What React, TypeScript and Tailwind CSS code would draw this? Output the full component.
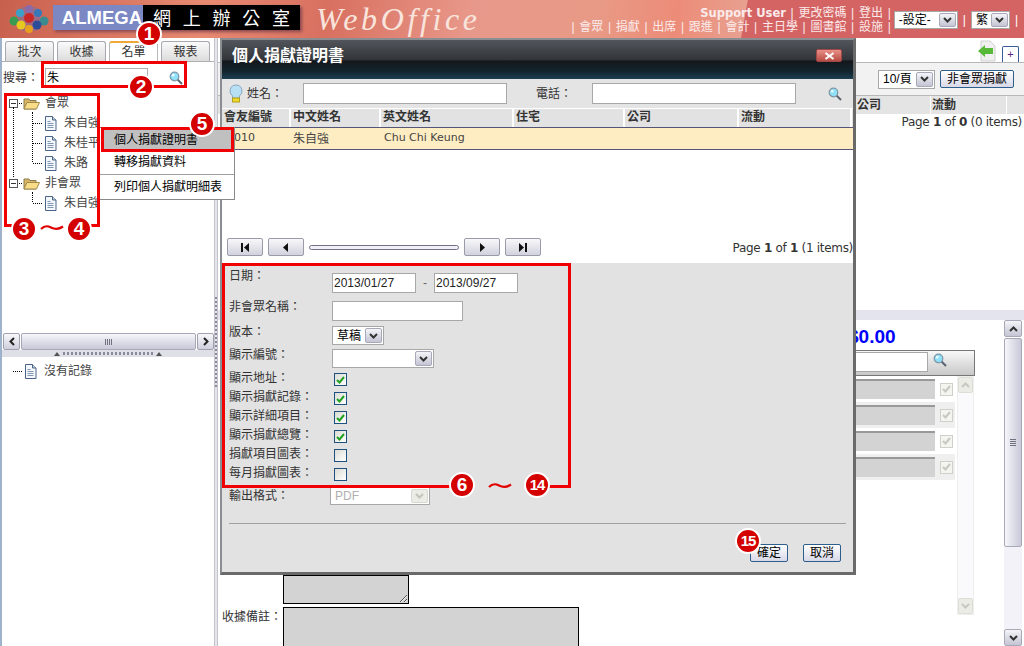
import React from "react";

const cjk = '"Liberation Sans","Noto Sans CJK TC",sans-serif';

function Mag({ className = "" }: { className?: string }) {
  return (
    <svg width="14" height="14" viewBox="0 0 14 14" className={className}>
      <line x1="8.5" y1="8.5" x2="13" y2="13" stroke="#5a6470" strokeWidth="2" />
      <circle cx="5.5" cy="5.5" r="4.3" fill="#8fe0f8" stroke="#7d95a5" strokeWidth="1.2" />
      <circle cx="4.2" cy="4.2" r="1.4" fill="#e6fbff" />
    </svg>
  );
}

function Doc() {
  return (
    <svg width="13" height="15" viewBox="0 0 13 15" className="shrink-0">
      <path d="M1.500.5h7l3.500 3.500v10.500h-10.500z" fill="#f4f7fb" stroke="#4a6488" />
      <path d="M8.500.5v3.500h3.500" fill="#c8d4e4" stroke="#4a6488" />
      <path d="M3.500 5.500h3M3.500 7.500h6M3.500 9.500h6M3.500 11.500h6" stroke="#8095b0" />
    </svg>
  );
}

function Folder() {
  return (
    <svg width="17" height="13" viewBox="0 0 17 13" className="shrink-0">
      <path d="M1 12V2h5l1 1.500h6V12z" fill="#d8b460" stroke="#8a7a50" />
      <path d="M1 12l3-6.500h12.500L13.500 12z" fill="#f8dc88" stroke="#a08a50" />
    </svg>
  );
}

function Chevron({ up = false, color = "#333" }: { up?: boolean; color?: string }) {
  return (
    <svg width="9" height="6" viewBox="0 0 9 6">
      <path d={up ? "M1 5l3.500-3.500L8 5" : "M1 1l3.500 3.500L8 1"} fill="none" stroke={color} strokeWidth="2" />
    </svg>
  );
}

function ArrowBtn({ className = "", faded = false }: { className?: string; faded?: boolean }) {
  return (
    <span
      className={`flex items-center justify-center rounded-[2px] border ${
        faded ? "border-[#d8d8d0] bg-[#ecece6]" : "border-[#a8a8b8] bg-gradient-to-b from-[#f4f4f8] to-[#c4c4d4]"
      } ${className}`}
    >
      <Chevron color={faded ? "#c4c4bc" : "#333"} />
    </span>
  );
}

function Select({ w, h = 19, text, disabled = false, cls = "" }: { w: number; h?: number; text?: string; disabled?: boolean; cls?: string }) {
  return (
    <div
      style={{ width: w, height: h }}
      className={`flex items-center justify-between border border-[#a8a8a8] bg-white p-px text-[12px] ${cls}`}
    >
      <span className={`pl-[3px] leading-none ${disabled ? "text-[#b0b0b0]" : "text-black"}`}>{text}</span>
      <ArrowBtn faded={disabled} className="h-full w-[17px] shrink-0" />
    </div>
  );
}

function Badge({ n, x, y, small = false }: { n: string; x: number; y: number; small?: boolean }) {
  return (
    <span
      style={{ left: x - 13, top: y - 13 }}
      className={`absolute z-30 flex h-[26px] w-[26px] items-center justify-center rounded-full border-2 border-white bg-[#d40000] font-bold text-white ${
        small ? "text-[15px] tracking-[-1px]" : "text-[19px]"
      } font-['Liberation_Sans',sans-serif]`}
    >
      {n}
    </span>
  );
}

function Tilde({ x, y, w, maskCls }: { x: number; y: number; w: number; maskCls: string }) {
  return (
    <div style={{ left: x, top: y, width: w }} className={`absolute z-[25] flex h-[8px] items-center justify-center ${maskCls}`}>
      <svg width="24" height="8" viewBox="0 0 24 8">
        <path d="M1 5c4-4 7-3 10-1.500s7 2.500 12-1" fill="none" stroke="#e00000" strokeWidth="2.200" />
      </svg>
    </div>
  );
}

function RedBox({ x, y, w, h }: { x: number; y: number; w: number; h: number }) {
  return <div style={{ left: x, top: y, width: w, height: h }} className="pointer-events-none absolute z-20 border-[3px] border-[#f00000]" />;
}

function Tab({ label, active = false, w }: { label: string; active?: boolean; w: number }) {
  return (
    <div
      style={{ width: w }}
      className={`flex h-[20px] items-center justify-center rounded-t-[3px] border border-b-0 text-[12px] text-[#333] ${
        active ? "border-[#b8b8b8] border-t-2 border-t-[#f0a838] bg-white" : "border-[#a8a8b0] bg-gradient-to-b from-[#fafafa] to-[#dcdcdc]"
      }`}
    >
      {label}
    </div>
  );
}

function TreeRow({ icon, label, indent, elbow = false, plus = false }: { icon: "doc" | "folder"; label: string; indent: number; elbow?: boolean; plus?: boolean }) {
  return (
    <div style={{ paddingLeft: indent }} className="flex h-[20px] items-center text-[12px] text-[#444] whitespace-nowrap">
      {plus && (
        <span className="mr-px flex h-[9px] w-[9px] items-center justify-center border border-[#555] bg-white">
          <span className="block h-px w-[5px] bg-[#333]" />
        </span>
      )}
      {plus && <span className="mr-px w-[3px] border-t border-dotted border-black" />}
      {elbow && <span className="mr-[2px] w-[9px] border-t border-dotted border-black" />}
      {icon === "doc" ? <Doc /> : <Folder />}
      <span className={icon === "doc" ? "ml-[7px]" : "ml-[5px]"}>{label}</span>
    </div>
  );
}

function Tree() {
  return (
    <div className="relative">
      <div className="absolute left-[11px] top-[14px] h-[70px] border-l border-dotted border-black" />
      <div className="absolute left-[30px] top-[19px] h-[50px] border-l border-dotted border-black" />
      <div className="absolute left-[30px] top-[99px] h-[10px] border-l border-dotted border-black" />
      <TreeRow icon="folder" label="會眾" indent={7} plus />
      <TreeRow icon="doc" label="朱自強" indent={31} elbow />
      <TreeRow icon="doc" label="朱桂平" indent={31} elbow />
      <TreeRow icon="doc" label="朱路" indent={31} elbow />
      <TreeRow icon="folder" label="非會眾" indent={7} plus />
      <TreeRow icon="doc" label="朱自強" indent={31} elbow />
    </div>
  );
}

function ScrollH() {
  return (
    <div className="flex h-[17px] gap-px">
      <button className="flex w-[17px] items-center justify-center rounded-[2px] border border-[#a0a0b0] bg-gradient-to-b from-[#f8f8fa] to-[#d0d0de] text-[#222]">
        <svg width="6" height="9" viewBox="0 0 6 9"><path d="M5 1L1.500 4.500 5 8" fill="none" stroke="#222" strokeWidth="2" /></svg>
      </button>
      <div className="flex flex-1 items-center justify-center rounded-[2px] border border-[#a8a8b8] bg-gradient-to-b from-[#f6f6fa] to-[#c8c8d8]">
        <span className="h-[6px] w-[8px] bg-[repeating-linear-gradient(90deg,#707080_0,#707080_1px,transparent_1px,transparent_2px)]" />
      </div>
      <button className="flex w-[17px] items-center justify-center rounded-[2px] border border-[#a0a0b0] bg-gradient-to-b from-[#f8f8fa] to-[#d0d0de]">
        <svg width="6" height="9" viewBox="0 0 6 9"><path d="M1 1l3.500 3.500L1 8" fill="none" stroke="#222" strokeWidth="2" /></svg>
      </button>
    </div>
  );
}

function LeftPanel() {
  return (
    <aside className="flex h-full w-[214px] shrink-0 flex-col border-l-2 border-[#9fb2cc] bg-white">
      <div className="flex h-[24px] items-end gap-[3px] border-b border-[#b0b0b0] pl-[3px]">
        <Tab label="批次" w={49} />
        <Tab label="收據" w={49} />
        <Tab label="名單" w={49} active />
        <Tab label="報表" w={49} />
      </div>
      <div className="flex h-[31px] items-center pl-px text-[12px] text-[#333]">
        <span>搜尋：</span>
        <div className="ml-[6px] flex h-[19px] w-[103px] items-center border border-[#b0b0b0] pl-px text-black">朱</div>
        <Mag className="ml-[21px]" />
      </div>
      <Tree />
      <div className="flex-1" />
      <div className="pl-px">
        <ScrollH />
      </div>
      <div className="flex h-[7px] items-center justify-center gap-[3px] bg-[#dfdfe8]">
        <svg width="6" height="4" viewBox="0 0 6 4"><path d="M3 0l3 4H0z" fill="#555" /></svg>
        <span className="h-[3px] w-[90px] bg-[repeating-linear-gradient(90deg,#8a8a98_0,#8a8a98_2px,transparent_2px,transparent_4px)]" />
        <svg width="6" height="4" viewBox="0 0 6 4"><path d="M3 0l3 4H0z" fill="#555" /></svg>
      </div>
      <div className="flex h-[289px] items-start pl-[11px] pt-[6px] text-[12px] text-[#444]">
        <div className="flex h-[16px] items-center">
          <span className="mr-[2px] w-[9px] border-t border-dotted border-black" />
          <Doc />
          <span className="ml-[7px]">沒有記錄</span>
        </div>
      </div>
    </aside>
  );
}

function Splitter() {
  return (
    <div className="flex h-full w-[4px] shrink-0 items-center justify-center border-x border-[#c4c4cc] bg-[#e4e4ea]">
      <span className="h-[90px] w-[2px] bg-[repeating-linear-gradient(180deg,#8a8a98_0,#8a8a98_2px,transparent_2px,transparent_4px)]" />
    </div>
  );
}

function Header() {
  const links = ["會眾", "捐獻", "出席", "跟進", "會計", "主日學", "圖書館", "設施"];
  return (
    <header className="flex h-[38px] w-full items-start bg-[linear-gradient(100deg,#c8604e_0%,#e88a72_20%,#d87060_32%,#e8988a_46%,#e89a86_58%,#ec8c78_66%,#e8a090_72.5%,#d46464_72.6%,#d46464_100%)] pl-[9px]">
      <svg width="40" height="30" viewBox="0 0 40 30" className="mt-[4px] shrink-0">
        <rect x="9" y="3" width="22" height="24" rx="6" fill="#a06a80" />
        <circle cx="20" cy="5" r="4" fill="#8a6aa8" />
        <circle cx="11" cy="9" r="4" fill="#3aa0c8" />
        <circle cx="29" cy="9" r="4" fill="#3878b8" />
        <circle cx="5" cy="17" r="4.500" fill="#3a9a50" />
        <circle cx="35" cy="17" r="4.500" fill="#3a8a90" />
        <circle cx="20" cy="14" r="5" fill="#c82828" />
        <circle cx="12" cy="21" r="4.500" fill="#e8c820" />
        <circle cx="28" cy="21" r="4.500" fill="#2c4c98" />
        <circle cx="20" cy="25" r="4" fill="#e8a020" />
      </svg>
      <div className="ml-[4px] mt-[5px] flex h-[25px] w-[247px] shrink-0 items-stretch shadow-[2px_2px_3px_#8a4a50]">
        <span className="flex w-[90px] items-center justify-end bg-[#7c88c4] pr-px font-['Liberation_Sans',sans-serif] text-[18.500px] font-bold text-white">ALMEGA</span>
        <span className="flex flex-1 items-center justify-between bg-black px-[10px] font-['Noto_Sans_CJK_TC',serif] text-[18px] text-white">
          <span>網</span><span>上</span><span>辦</span><span>公</span><span>室</span>
        </span>
      </div>
      <span className="ml-[16px] mt-px shrink-0 font-['Liberation_Serif',serif] text-[32px] italic leading-[36px] tracking-[3.600px] text-[#f8e4dc]">WebOffice</span>
      <div className="flex-1" />
      <div className="mt-[6px] flex flex-col items-end text-[12px] leading-[14px] text-[#fbeaea]">
        <div className="flex items-center gap-[4.700px] whitespace-nowrap">
          <span className="font-['DejaVu_Sans',sans-serif] text-[11.500px] font-bold">Support User</span>
          <span>|</span><span>更改密碼</span><span>|</span><span>登出</span><span>|</span>
        </div>
        <div className="flex items-center gap-[4.700px] whitespace-nowrap">
          {links.map((l) => (
            <React.Fragment key={l}>
              <span>|</span>
              <span>{l}</span>
            </React.Fragment>
          ))}
          <span>|</span>
        </div>
      </div>
      <div className="ml-[3px] mt-[11px] flex shrink-0 items-start gap-[5px] pr-[6px] text-white">
        <Select w={64} h={18} text="-設定-" />
        <span className="text-[12px] leading-[18px]">|</span>
        <Select w={39} h={18} text="繁" />
        <span className="text-[12px] leading-[18px]">|</span>
      </div>
    </header>
  );
}

function Pager() {
  const Btn = ({ d }: { d: React.ReactNode }) => (
    <button className="flex h-[18px] w-[36px] items-center justify-center rounded-[2px] border border-[#9a9aaa] bg-gradient-to-b from-[#f8f8fa] to-[#d2d2de]">
      <svg width="10" height="9" viewBox="0 0 10 9">{d}</svg>
    </button>
  );
  return (
    <div className="flex h-[25px] shrink-0 items-start pl-[5px]">
      <div className="flex items-center gap-[5px]">
        <Btn d={<><rect x="1" y="0" width="2" height="9" fill="#111" /><path d="M9 0v9L4 4.500z" fill="#111" /></>} />
        <Btn d={<path d="M7 0v9L2 4.500z" fill="#111" />} />
        <div className="h-[5px] w-[150px] rounded-full border border-[#707088] bg-[#f0f0f6]" />
        <Btn d={<path d="M3 0v9l5-4.500z" fill="#111" />} />
        <Btn d={<><path d="M1 0v9l5-4.500z" fill="#111" /><rect x="7" y="0" width="2" height="9" fill="#111" /></>} />
      </div>
      <div className="flex-1" />
      <span className="mt-px font-['DejaVu_Sans',sans-serif] text-[12px] tracking-[-0.300px] text-[#333]">
        Page <b>1</b> of <b>1</b> (1 items)
      </span>
    </div>
  );
}

function Check({ on }: { on: boolean }) {
  return (
    <span className="flex h-[13px] w-[13px] items-center justify-center border border-[#1c5180] bg-gradient-to-br from-[#dcdcd4] to-white">
      {on && (
        <svg width="9" height="8" viewBox="0 0 9 8">
          <path d="M1 4l2.500 2.500L8 1" fill="none" stroke="#21a121" strokeWidth="2" />
        </svg>
      )}
    </span>
  );
}

function FormRow({ label, h, children, pt = 0 }: { label: string; h: number; children?: React.ReactNode; pt?: number }) {
  return (
    <div style={{ height: h }} className="flex items-start text-[12px] text-[#333]">
      <span style={{ paddingTop: pt }} className="w-[103px] shrink-0 whitespace-nowrap leading-[14px]">{label}</span>
      {children}
    </div>
  );
}

function Dialog() {
  const cols = [
    ["會友編號", 69], ["中文姓名", 90], ["英文姓名", 133], ["住宅", 111], ["公司", 114], ["流動", 113],
  ] as const;
  const checks: [string, boolean][] = [
    ["顯示地址：", true], ["顯示捐獻記錄：", true], ["顯示詳細項目：", true], ["顯示捐獻總覽：", true], ["捐獻項目圖表：", false], ["每月捐獻圖表：", false],
  ];
  return (
    <section className="absolute left-[220px] top-[38px] z-10 flex h-[537px] w-[636px] flex-col border-2 border-b-[3px] border-r-[3px] border-[#8a8e92] border-b-[#6a6a6a] border-r-[#6a6a6a] bg-white">
      <div className="flex h-[39px] shrink-0 items-start justify-between bg-[linear-gradient(180deg,#52565c_0%,#32363a_50%,#14181c_54%,#12242e_80%,#1c3e50_100%)] pl-[10px] pr-[11px]">
        <h2 className="mt-[4px] text-[16px] font-bold text-white">個人捐獻證明書</h2>
        <button className="mt-[9px] flex h-[13px] w-[26px] items-center justify-center rounded-[2px] border border-[#a04848] bg-gradient-to-b from-[#e89088] to-[#b84c44]">
          <svg width="11" height="8" viewBox="0 0 11 8"><path d="M1.500 1l8 6M9.500 1l-8 6" stroke="#fff" strokeWidth="2" /></svg>
        </button>
      </div>
      <div className="flex h-[29px] shrink-0 items-center bg-[#e4e4e4] pl-[7px] text-[12px] text-[#333]">
        <svg width="14" height="20" viewBox="0 0 14 20" className="shrink-0">
          <path d="M7 1a6 6 0 0 0-3.500 10.900V14h7v-2.100A6 6 0 0 0 7 1z" fill="#b8e0f4" stroke="#8aa8c0" />
          <rect x="3.500" y="14" width="7" height="4" fill="#f0d828" stroke="#b0a020" />
        </svg>
        <span className="ml-[4px] w-[56px]">姓名：</span>
        <div className="h-[21px] w-[204px] border border-[#a8a8a8] bg-white" />
        <span className="ml-[29px] w-[56px]">電話：</span>
        <div className="h-[21px] w-[204px] border border-[#a8a8a8] bg-white" />
        <Mag className="ml-[32px]" />
      </div>
      <div className="flex h-[19px] shrink-0 border-t border-white bg-[#e2e2e2]">
        {cols.map(([c, w]) => (
          <span key={c} style={{ width: w }} className="border-r-2 border-white pl-[2px] text-[12px] font-bold leading-[17px] text-[#333]">
            {c}
          </span>
        ))}
      </div>
      <div className="flex h-[23px] shrink-0 items-center border-y border-[#55557a] bg-[#feedc2] text-[12px] text-[#444]">
        <span className="w-[69px] pl-[12px] font-['DejaVu_Sans',sans-serif] text-[11px]">010</span>
        <span className="w-[90px] pl-[2px]">朱自強</span>
        <span className="pl-[3px] font-['DejaVu_Sans',sans-serif] text-[11px]">Chu Chi Keung</span>
      </div>
      <div className="h-[88px] shrink-0" />
      <Pager />
      <div className="flex flex-1 flex-col bg-[#e2e2e2] px-[7px] pt-[6px]">
        <FormRow label="日期：" h={31}>
          <div className="mt-[4px] flex items-center text-[#222]">
            <span className="flex h-[20px] w-[84px] items-center border border-[#a8a8a8] bg-white pl-px">2013/01/27</span>
            <span className="mx-[7px] text-[#666]">-</span>
            <span className="flex h-[20px] w-[84px] items-center border border-[#a8a8a8] bg-white pl-px">2013/09/27</span>
          </div>
        </FormRow>
        <FormRow label="非會眾名稱：" h={25}>
          <div className="mt-px h-[20px] w-[131px] border border-[#a8a8a8] bg-white" />
        </FormRow>
        <FormRow label="版本：" h={23}>
          <span className="mt-px"><Select w={52} text="草稿" /></span>
        </FormRow>
        <FormRow label="顯示編號：" h={23}>
          <span className="mt-px"><Select w={102} /></span>
        </FormRow>
        {checks.map(([l, on]) => (
          <FormRow key={l} label={l} h={19}>
            <span className="ml-[2px] mt-[2px]"><Check on={on} /></span>
          </FormRow>
        ))}
        <FormRow label="輸出格式：" h={38} pt={4}>
          <span className="-ml-[2px] mt-[2px]">
            <Select w={100} h={18} text="PDF" disabled cls="font-['Liberation_Sans',sans-serif]" />
          </span>
        </FormRow>
        <div className="h-px bg-[#a0a0a0]" />
        <div className="flex justify-end gap-[15px] pr-[5px] pt-[20px]">
          {["確定", "取消"].map((t) => (
            <button key={t} className="h-[18px] w-[38px] rounded-[2px] border border-[#2e5f8c] bg-gradient-to-b from-white to-[#d8d8e8] text-[12px] leading-none text-black">
              {t}
            </button>
          ))}
        </div>
      </div>
    </section>
  );
}

function RightPanel() {
  return (
    <main className="flex h-full flex-1 flex-col bg-white">
      <div className="flex h-[24px] shrink-0 items-end justify-end pr-[5px]">
        <svg width="22" height="22" viewBox="0 0 22 22" className="mr-[4px]">
          <path d="M5 1h9l5 5v15H5z" fill="#f0f0f0" stroke="#d0d0d0" />
          <path d="M2 11l7-6v3h8v6H9v3z" fill="#58b838" />
        </svg>
        <div className="flex h-[16px] w-[17px] items-center justify-center rounded-t-[2px] border border-b-0 border-[#3a5a9a] bg-white text-[11px] leading-none text-[#602080]">+</div>
      </div>
      <div className="flex h-[34px] shrink-0 items-center justify-end gap-[5px] border-y border-[#b8b8b8] bg-[#f2f2f2] pr-[10px] text-[12px]">
        <Select w={57} text="10/頁" />
        <button className="h-[18px] w-[74px] rounded-[2px] border border-[#2e5f8c] bg-gradient-to-b from-white to-[#d8d8e8] leading-none text-black">非會眾捐獻</button>
      </div>
      <div className="flex h-[18px] shrink-0 justify-end bg-[#e4e4e4] pr-[4px] text-[12px] font-bold leading-[18px] text-[#333]">
        <span className="w-[75px] border-r border-white pl-px">公司</span>
        <span className="w-[76px] border-r border-white pl-px">流動</span>
        <span className="w-[13px]" />
      </div>
      <div className="h-[16px] shrink-0 whitespace-nowrap pr-[2px] text-right font-['DejaVu_Sans',sans-serif] text-[12px] leading-[16px] tracking-[-0.300px] text-[#333]">
        Page <b>1</b> of <b>0</b> (0 items)
      </div>
      <div className="flex-1" />
      <div className="h-[10px] shrink-0 bg-[#e4e4ee]" />
      <div className="flex h-[326px] shrink-0 bg-white">
        <div className="w-[637px] shrink-0 pl-[4px] pt-[255px] text-[12px] text-[#333]">
          <textarea disabled className="ml-[61px] block h-[29px] w-[126px] resize border border-black bg-[#d3d3d3]" />
          <div className="mt-[3px] flex items-start">
            <span className="w-[61px] pt-px">收據備註：</span>
            <textarea disabled className="block h-[60px] w-[296px] resize border border-black bg-[#d3d3d3]" />
          </div>
        </div>
        <div className="w-[149px] shrink-0 pt-[6px]">
          <div className="-ml-[7px] font-['Liberation_Sans',sans-serif] text-[19px] font-bold leading-[22px] text-[#0000ff]">$0.00</div>
          <div className="w-[102px]">
            <div className="mt-[2px] flex h-[26px] w-[120px] items-start border-y border-r border-[#777] bg-gradient-to-b from-[#f8f8f8] to-[#c8c8c8]">
              <div className="mt-px h-[20px] w-[73px] border border-[#a8a8a8] bg-white" />
              <Mag className="ml-[5px] mt-[2px]" />
            </div>
            {[0, 1, 2, 3].map((i) => (
              <div key={i} className={`flex h-[26px] w-[100px] items-center ${i % 2 ? "bg-[#efefef]" : "bg-white"}`}>
                <div className="h-[20px] w-[80px] border-t-2 border-[#999] bg-[#d3d3d3]" />
                <span className="ml-[5px] flex h-[13px] w-[13px] items-center justify-center border border-[#d0d0c8] bg-[#f4f4f0]">
                  <svg width="9" height="8" viewBox="0 0 9 8"><path d="M1 4l2.500 2.500L8 1" fill="none" stroke="#c8c8c0" strokeWidth="2" /></svg>
                </span>
              </div>
            ))}
          </div>
        </div>
        <div className="flex h-full flex-1 flex-col pr-[2px]">
          <span className="flex h-[17px] w-full items-center justify-center rounded-[2px] border border-[#a8a8b8] bg-gradient-to-b from-[#f4f4f8] to-[#c4c4d4]">
            <Chevron up />
          </span>
          <div className="mt-px flex h-[209px] items-center justify-center rounded-[2px] border border-[#a8a8b8] bg-gradient-to-r from-[#f6f6fa] to-[#c8c8d8]">
            <span className="h-[7px] w-[6px] bg-[repeating-linear-gradient(180deg,#707080_0,#707080_1px,transparent_1px,transparent_2px)]" />
          </div>
          <div className="flex-1 bg-[#f2f2f8]" />
          <ArrowBtn className="h-[17px] w-full" />
        </div>
      </div>
    </main>
  );
}

function InnerScroll() {
  return (
    <div className="absolute left-[957px] top-[376px] z-0 flex h-[239px] w-[17px] flex-col justify-between border border-[#eeeeee] bg-[#fafafc]">
      <span className="flex h-[16px] items-center justify-center rounded-[2px] border border-[#deded6] bg-[#ecece6]"><Chevron up color="#c8c8c0" /></span>
      <span className="flex h-[16px] items-center justify-center rounded-[2px] border border-[#deded6] bg-[#ecece6]"><Chevron color="#c8c8c0" /></span>
    </div>
  );
}

function ContextMenu() {
  const item = "flex items-center text-[12px] text-black";
  return (
    <div className="absolute left-[97px] top-[127px] z-[15] flex h-[73px] w-[138px] flex-col border border-[#8a8a8a] bg-white pb-px pt-[2px]">
      <div className={`${item} ml-[6px] h-[20px] bg-[#c0c0c0] pl-[10px]`}>個人捐獻證明書</div>
      <div className={`${item} h-[24px] pl-[16px]`}>轉移捐獻資料</div>
      <div className="h-px bg-[#a0a0a0]" />
      <div className={`${item} flex-1 pl-[16px]`}>列印個人捐獻明細表</div>
    </div>
  );
}

export default function App() {
  return (
    <div style={{ fontFamily: cjk }} className="relative h-[646px] w-[1024px] overflow-hidden bg-white">
      <Header />
      <div className="flex h-[608px]">
        <LeftPanel />
        <Splitter />
        <RightPanel />
      </div>
      <InnerScroll />
      <ContextMenu />
      <Dialog />
      <RedBox x={41} y={61} w={146} h={27} />
      <RedBox x={4} y={93} w={96} h={134} />
      <RedBox x={101} y={127} w={133} h={25} />
      <RedBox x={222} y={263} w={349} h={225} />
      <Tilde x={36} y={224} w={32} maskCls="bg-white" />
      <Tilde x={474} y={482} w={52} maskCls="bg-[#e2e2e2]" />
      <Badge n="1" x={149} y={34} />
      <Badge n="2" x={141} y={87} />
      <Badge n="3" x={24} y={229} />
      <Badge n="4" x={79} y={229} />
      <Badge n="5" x={202} y={124} />
      <Badge n="6" x={462} y={485} />
      <Badge n="14" x={537} y={485} small />
      <Badge n="15" x={748} y={541} small />
    </div>
  );
}
